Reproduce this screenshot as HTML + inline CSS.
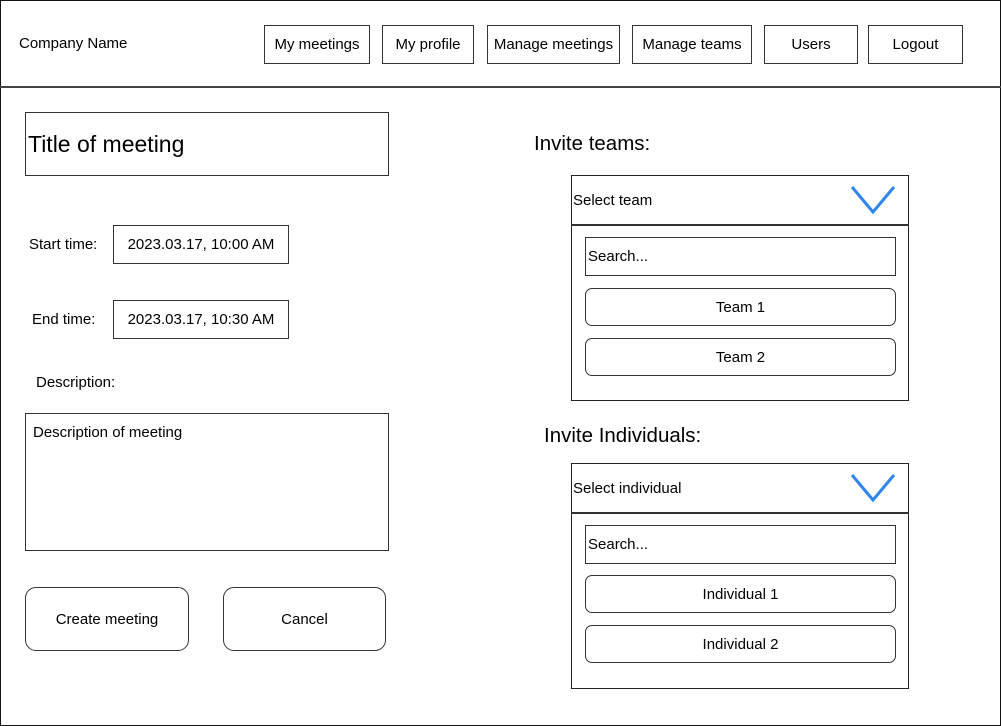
<!DOCTYPE html>
<html><head><style>
body{margin:0;width:1001px;height:726px;position:relative;font-family:"Liberation Sans",sans-serif;color:#000;background:#fff;overflow:hidden}
.a{position:absolute;box-sizing:border-box}
.b{border:1.5px solid #333;display:flex;align-items:center;justify-content:center;font-size:15px}
.l{justify-content:flex-start;padding-left:2px}
.t{font-size:15px}
</style></head><body>
<div class="a" style="left:0;top:0;width:1001px;height:726px;border:1.5px solid #111"></div>
<div class="a" style="left:0;top:86px;width:1001px;height:2px;background:#444"></div>
<div class="a t" style="left:19px;top:35px">Company Name</div>
<div class="a b" style="left:264px;top:25px;width:106px;height:39px">My meetings</div>
<div class="a b" style="left:382px;top:25px;width:92px;height:39px">My profile</div>
<div class="a b" style="left:487px;top:25px;width:133px;height:39px">Manage meetings</div>
<div class="a b" style="left:632px;top:25px;width:120px;height:39px">Manage teams</div>
<div class="a b" style="left:764px;top:25px;width:94px;height:39px">Users</div>
<div class="a b" style="left:868px;top:25px;width:95px;height:39px">Logout</div>

<div class="a b l" style="left:25px;top:112px;width:364px;height:64px;font-size:23px">Title of meeting</div>
<div class="a t" style="left:29px;top:236px">Start time:</div>
<div class="a b" style="left:113px;top:225px;width:176px;height:39px">2023.03.17, 10:00 AM</div>
<div class="a t" style="left:32px;top:311px">End time:</div>
<div class="a b" style="left:113px;top:300px;width:176px;height:39px">2023.03.17, 10:30 AM</div>
<div class="a t" style="left:36px;top:374px">Description:</div>
<div class="a b" style="left:25px;top:413px;width:364px;height:138px;align-items:flex-start;justify-content:flex-start;padding:10px 7px">Description of meeting</div>
<div class="a b" style="left:25px;top:587px;width:164px;height:64px;border-radius:11px">Create meeting</div>
<div class="a b" style="left:223px;top:587px;width:163px;height:64px;border-radius:11px">Cancel</div>

<div class="a" style="left:534px;top:132px;font-size:20.5px">Invite teams:</div>
<div class="a" style="left:571px;top:175px;width:338px;height:226px;border:1.5px solid #222"></div>
<div class="a" style="left:571px;top:224px;width:338px;height:2px;background:#333"></div>
<div class="a t" style="left:573px;top:192px">Select team</div>
<svg class="a" style="left:850px;top:185px" width="46" height="30"><path d="M2 2 L23 27 L44 2" fill="none" stroke="#2f86f0" stroke-width="3"/></svg>
<div class="a b l" style="left:585px;top:237px;width:311px;height:39px">Search...</div>
<div class="a b" style="left:585px;top:288px;width:311px;height:38px;border-radius:7px">Team 1</div>
<div class="a b" style="left:585px;top:338px;width:311px;height:38px;border-radius:7px">Team 2</div>

<div class="a" style="left:544px;top:424px;font-size:20.5px">Invite Individuals:</div>
<div class="a" style="left:571px;top:463px;width:338px;height:226px;border:1.5px solid #222"></div>
<div class="a" style="left:571px;top:512px;width:338px;height:2px;background:#333"></div>
<div class="a t" style="left:573px;top:480px">Select individual</div>
<svg class="a" style="left:850px;top:473px" width="46" height="30"><path d="M2 2 L23 27 L44 2" fill="none" stroke="#2f86f0" stroke-width="3"/></svg>
<div class="a b l" style="left:585px;top:525px;width:311px;height:39px">Search...</div>
<div class="a b" style="left:585px;top:575px;width:311px;height:38px;border-radius:7px">Individual 1</div>
<div class="a b" style="left:585px;top:625px;width:311px;height:38px;border-radius:7px">Individual 2</div>
</body></html>
